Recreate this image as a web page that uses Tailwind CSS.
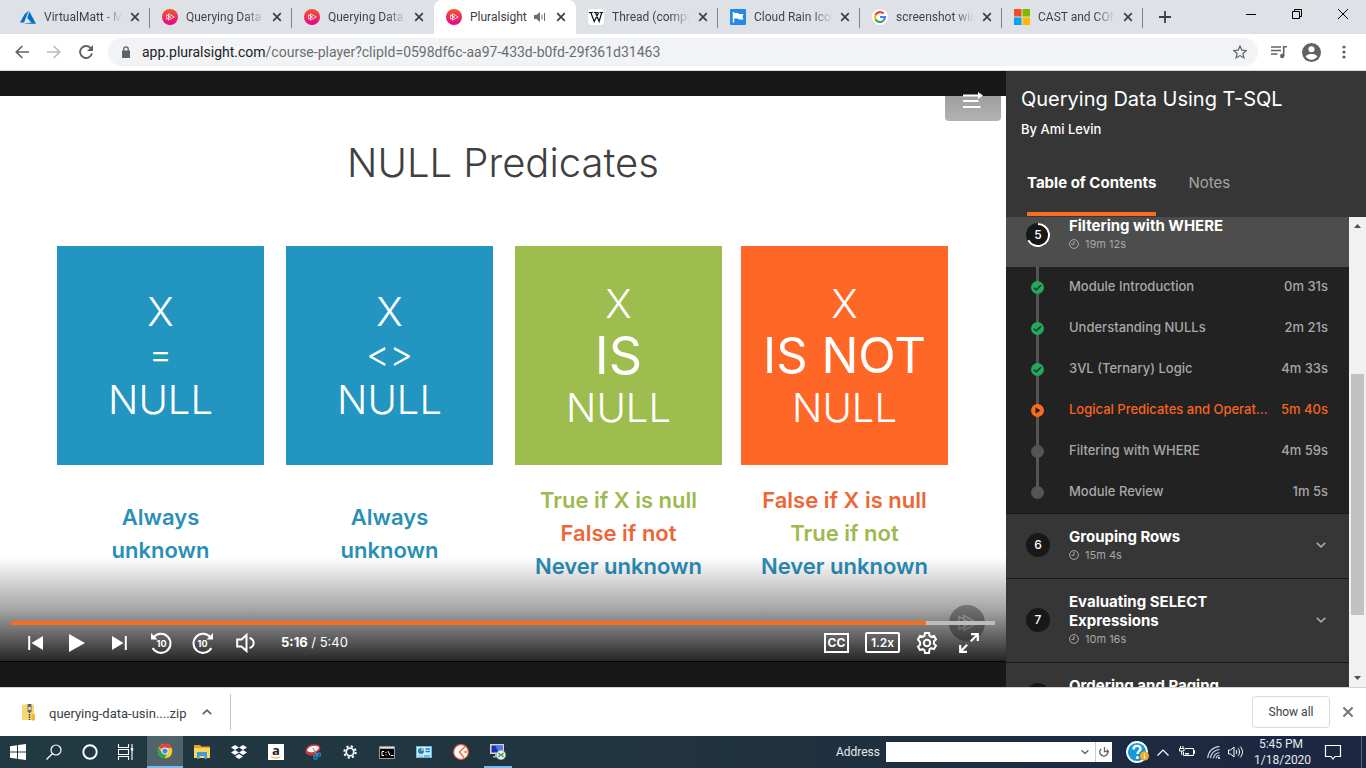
<!DOCTYPE html>
<html lang="en">
<head>
<meta charset="utf-8">
<meta name="viewport" content="width=device-width, initial-scale=1">
<title>Pluralsight</title>
<script src="https://cdn.jsdelivr.net/npm/@tailwindcss/browser@4"></script>
</head>
<body class="flex h-screen flex-col overflow-hidden bg-white font-['Roboto','Noto_Sans',sans-serif] text-xs text-[#3c4043]">

<!-- shared symbols -->
<svg class="absolute size-0" aria-hidden="true">
  <defs>
    <linearGradient id="psg" x1="0" y1="0" x2="0" y2="1"><stop offset="0" stop-color="#f05a28"/><stop offset="1" stop-color="#ec008c"/></linearGradient>
  </defs>
  <symbol id="ps" viewBox="0 0 16 16"><circle cx="8" cy="8" r="8" fill="url(#psg)"/><path d="M6.5 4.8v6.4L12.3 8zM4.6 5.8v4.4L8.6 8z" fill="none" stroke="#fff" stroke-opacity=".85" stroke-width=".9"/></symbol>
  <symbol id="x" viewBox="0 0 10 10"><path d="M1.2 1.2l7.6 7.6M8.8 1.2L1.2 8.8" stroke="currentColor" stroke-width="1.7" fill="none"/></symbol>
  <symbol id="clock" viewBox="0 0 10 10"><circle cx="5" cy="5" r="4.4" fill="none" stroke="currentColor"/><path d="M5 2v3.3H2.4" fill="none" stroke="currentColor"/></symbol>
  <symbol id="done" viewBox="0 0 13 13"><circle cx="6.5" cy="6.5" r="6.5" fill="#24a85b"/><path d="M3 6.8l2.3 2.1 4.6-4.6" fill="none" stroke="#222" stroke-width="1.4"/></symbol>
  <symbol id="dot" viewBox="0 0 13 13"><circle cx="6.5" cy="6.5" r="6.5" fill="#555"/></symbol>
  <symbol id="chev" viewBox="0 0 10 6"><path d="M.8.8L5 4.8 9.2.8" fill="none" stroke="currentColor" stroke-width="1.7"/></symbol>
</svg>

<!-- tab strip -->
<header class="shrink-0">
  <div class="flex h-[34px] bg-[#dee1e6] pl-2">
    <div class="relative flex w-[142px] items-center pl-3 pr-2.5">
      <svg class="size-4 shrink-0" viewBox="0 0 16 16"><path d="M8.8 1.5L4.6 5.2 0 13.6h4zM9.4 2.6L7.2 8.9l4.2 4.7-8.2 1.2H16z" fill="#0072c6"/></svg>
      <span class="ml-2 flex-1 overflow-hidden whitespace-nowrap bg-linear-to-r from-[#3c4043] from-75% to-transparent bg-clip-text text-transparent">VirtualMatt - Microsoft</span>
      <button aria-label="Close tab" class="ml-2 shrink-0"><svg class="size-2.5"><use href="#x"/></svg></button>
      <i class="absolute right-0 top-2 h-5 w-px bg-[#808387]"></i>
    </div>
    <div class="relative flex w-[142px] items-center pl-3 pr-2.5">
      <svg class="size-4 shrink-0"><use href="#ps"/></svg>
      <span class="ml-2 flex-1 overflow-hidden whitespace-nowrap bg-linear-to-r from-[#3c4043] from-75% to-transparent bg-clip-text text-transparent">Querying Data Using</span>
      <button aria-label="Close tab" class="ml-2 shrink-0"><svg class="size-2.5"><use href="#x"/></svg></button>
      <i class="absolute right-0 top-2 h-5 w-px bg-[#808387]"></i>
    </div>
    <div class="flex w-[142px] items-center pl-3 pr-2.5">
      <svg class="size-4 shrink-0"><use href="#ps"/></svg>
      <span class="ml-2 flex-1 overflow-hidden whitespace-nowrap bg-linear-to-r from-[#3c4043] from-75% to-transparent bg-clip-text text-transparent">Querying Data Using</span>
      <button aria-label="Close tab" class="ml-2 shrink-0"><svg class="size-2.5"><use href="#x"/></svg></button>
    </div>
    <div class="flex w-[142px] items-center rounded-t-lg bg-white pl-3 pr-2.5">
      <svg class="size-4 shrink-0"><use href="#ps"/></svg>
      <span class="ml-2 flex-1 whitespace-nowrap">Pluralsight</span>
      <svg class="size-3 shrink-0 text-[#6b6e72]" viewBox="0 0 12 12"><path d="M0 4h2.5L6 1v10L2.500 8H0z" fill="currentColor"/><path d="M8 3.500v5M10.500 2v8" stroke="currentColor"/></svg>
      <button aria-label="Close tab" class="ml-2.5 shrink-0"><svg class="size-2.5"><use href="#x"/></svg></button>
    </div>
    <div class="relative flex w-[142px] items-center pl-3 pr-2.5">
      <svg class="size-4 shrink-0" viewBox="0 0 16 16"><rect width="16" height="16" rx="3" fill="#fff"/><path d="M.8 3.500h4M5.800 3.500h4M11.600 3.500h3.600M2.800 3.500l3.400 9 4.500-9M7.500 3.500l3.600 9 2.700-9" fill="none" stroke="#111" stroke-width="1.200"/></svg>
      <span class="ml-2 flex-1 overflow-hidden whitespace-nowrap bg-linear-to-r from-[#3c4043] from-75% to-transparent bg-clip-text text-transparent">Thread (computing)</span>
      <button aria-label="Close tab" class="ml-2 shrink-0"><svg class="size-2.5"><use href="#x"/></svg></button>
      <i class="absolute right-0 top-2 h-5 w-px bg-[#808387]"></i>
    </div>
    <div class="relative flex w-[142px] items-center pl-3 pr-2.5">
      <svg class="size-4 shrink-0" viewBox="0 0 16 16"><rect width="16" height="16" rx="1" fill="#228ae6"/><path d="M3.500 3v10.500" stroke="#fff" stroke-width="1.500"/><path d="M4 4h4l1 1h4.500l-1 2.700 1 2.800H9l-1-1H4z" fill="#fff"/></svg>
      <span class="ml-2 flex-1 overflow-hidden whitespace-nowrap bg-linear-to-r from-[#3c4043] from-75% to-transparent bg-clip-text text-transparent">Cloud Rain Icon</span>
      <button aria-label="Close tab" class="ml-2 shrink-0"><svg class="size-2.5"><use href="#x"/></svg></button>
      <i class="absolute right-0 top-2 h-5 w-px bg-[#808387]"></i>
    </div>
    <div class="relative flex w-[142px] items-center pl-3 pr-2.5">
      <svg class="size-4 shrink-0" viewBox="0 0 16 16"><circle cx="8" cy="8" r="8" fill="#fff"/><g fill="none" stroke-width="2.200"><path d="M11.600 4.500A5 5 0 0 0 3.500 6" stroke="#ea4335"/><path d="M3.500 6a5 5 0 0 0 0 4.200" stroke="#fbbc05"/><path d="M3.500 10.200a5 5 0 0 0 7.800 1.500" stroke="#34a853"/><path d="M11.300 11.700A5 5 0 0 0 13 8H8" stroke="#4285f4"/></g></svg>
      <span class="ml-2 flex-1 overflow-hidden whitespace-nowrap bg-linear-to-r from-[#3c4043] from-75% to-transparent bg-clip-text text-transparent">screenshot windows</span>
      <button aria-label="Close tab" class="ml-2 shrink-0"><svg class="size-2.5"><use href="#x"/></svg></button>
      <i class="absolute right-0 top-2 h-5 w-px bg-[#808387]"></i>
    </div>
    <div class="relative flex w-[141px] items-center pl-3 pr-2.5">
      <svg class="size-4 shrink-0" viewBox="0 0 16 16"><path d="M0 0h7.500v7.500H0z" fill="#f25022"/><path d="M8.500 0H16v7.500H8.500z" fill="#7fba00"/><path d="M0 8.500h7.500V16H0z" fill="#00a4ef"/><path d="M8.500 8.500H16V16H8.500z" fill="#ffb900"/></svg>
      <span class="ml-2 flex-1 overflow-hidden whitespace-nowrap bg-linear-to-r from-[#3c4043] from-75% to-transparent bg-clip-text text-transparent">CAST and CONVERT</span>
      <button aria-label="Close tab" class="ml-2 shrink-0"><svg class="size-2.5"><use href="#x"/></svg></button>
      <i class="absolute right-0 top-2 h-5 w-px bg-[#808387]"></i>
    </div>
    <button aria-label="New tab" class="ml-2 flex w-7 items-center justify-center"><svg class="size-3" viewBox="0 0 12 12"><path d="M6 0v12M0 6h12" stroke="#3c4043" stroke-width="1.800"/></svg></button>
    <div class="ml-auto flex h-7 text-black">
      <button aria-label="Minimize" class="flex w-[46px] items-center justify-center"><svg class="size-2.5" viewBox="0 0 10 10"><path d="M0 5.500h10" stroke="currentColor"/></svg></button>
      <button aria-label="Restore" class="flex w-[46px] items-center justify-center"><svg class="size-2.5" viewBox="0 0 10 10"><path d="M.5 2.500h7v7h-7zM2.500 2.500v-2h7v7h-2" fill="none" stroke="currentColor"/></svg></button>
      <button aria-label="Close" class="flex w-[46px] items-center justify-center"><svg class="size-2.5" viewBox="0 0 10 10"><path d="M0 0l10 10M10 0L0 10" stroke="currentColor"/></svg></button>
    </div>
  </div>

  <!-- toolbar -->
  <div class="flex h-[37px] items-center border-b border-[#d5d8dc] bg-white pr-3.5">
    <div class="flex w-[108px] shrink-0 items-center gap-[18px] pl-[15px] text-[#5f6368]">
      <button aria-label="Back"><svg class="size-3.5" viewBox="0 0 14 14"><path d="M14 7H1.500M7.300 1L1.300 7l6 6" fill="none" stroke="currentColor" stroke-width="1.700"/></svg></button>
      <button aria-label="Forward" class="text-[#b8babd]"><svg class="size-3.5" viewBox="0 0 14 14"><path d="M0 7h12.500M6.700 1l6 6-6 6" fill="none" stroke="currentColor" stroke-width="1.700"/></svg></button>
      <button aria-label="Reload"><svg class="size-3.5" viewBox="0 0 14 14"><path d="M12 3.500A6 6 0 1 0 13 8.400" fill="none" stroke="currentColor" stroke-width="1.900"/><path d="M14 0v6H8z" fill="currentColor"/></svg></button>
    </div>
    <div class="flex h-7 flex-1 items-center rounded-full bg-[#f1f3f4] pl-3.5 pr-[11px]">
      <svg class="h-3 w-2 shrink-0" viewBox="0 0 8 12"><path d="M0 4.500h8V12H0z" fill="#5f6368"/><path d="M1.800 5V3a2.200 2.200 0 0 1 4.400 0v2" fill="none" stroke="#5f6368" stroke-width="1.300"/></svg>
      <a href="#" class="ml-3 flex-1 whitespace-nowrap text-[14px] text-[#6a6e73]"><span class="text-[#202124]">app.pluralsight.com</span>/course-player?clipId=0598df6c-aa97-433d-b0fd-29f361d31463</a>
      <button aria-label="Bookmark"><svg class="size-3.5" viewBox="0 0 14 14"><path d="M7 1l1.800 4.100 4.500.4-3.400 3 1 4.400L7 10.600l-3.900 2.300 1-4.400-3.400-3 4.500-.4z" fill="none" stroke="#5f6368" stroke-width="1.200"/></svg></button>
    </div>
    <div class="flex shrink-0 items-center gap-[15px] pl-[13px] text-[#5f6368]">
      <button aria-label="Media"><svg class="h-3.5 w-4" viewBox="0 0 16 14"><path d="M0 2h10M0 5.500h10M0 9h6.500" stroke="currentColor" stroke-width="1.500"/><path d="M12.700 11V1.800H16" fill="none" stroke="currentColor" stroke-width="1.600"/><circle cx="11.200" cy="11" r="2.200" fill="currentColor"/></svg></button>
      <button aria-label="Profile"><svg class="size-[19px]" viewBox="0 0 20 20"><circle cx="10" cy="10" r="10" fill="currentColor"/><circle cx="10" cy="6.500" r="3.200" fill="#fff"/><path d="M3.800 14.200C5 12.300 8 11.700 10 11.700s5 .6 6.200 2.500A7.600 7.600 0 0 1 10 17.500a7.600 7.600 0 0 1-6.200-3.300z" fill="#fff"/></svg></button>
      <button aria-label="Menu" class="flex w-4 justify-center"><svg class="h-3.5 w-1" viewBox="0 0 4 14"><circle cx="2" cy="2" r="1.600" fill="currentColor"/><circle cx="2" cy="7" r="1.600" fill="currentColor"/><circle cx="2" cy="12" r="1.600" fill="currentColor"/></svg></button>
    </div>
  </div>
</header>

<!-- page -->
<main class="flex min-h-0 flex-1 bg-[#181818] font-['Inter',sans-serif]">

  <!-- player -->
  <section class="flex min-w-0 flex-1 flex-col justify-center">
    <div class="relative aspect-video w-full border-b border-black bg-white">
      <!-- slide -->
      <h1 class="pt-[43px] text-center text-[40px] font-light leading-[48px] text-[#404040]">NULL Predicates</h1>
      <div class="mt-[59px] grid grid-cols-[57fr_207fr_22fr_207fr_22fr_207fr_19fr_207fr_58fr] text-center text-[40px] font-light leading-[46px] text-white">
        <div class="col-start-2 flex h-[219px] flex-col justify-center bg-[#2295c0] pt-1"><p>X</p><p class="text-[36px] leading-[38px]">=</p><p class="leading-[54px]">NULL</p></div>
        <div class="col-start-4 flex h-[219px] flex-col justify-center bg-[#2295c0] pt-1"><p>X</p><p class="text-[36px] leading-[38px]">&lt;&gt;</p><p class="leading-[54px]">NULL</p></div>
        <div class="col-start-6 flex h-[219px] flex-col justify-center bg-[#9dbd4e]"><p>X</p><p class="text-[52px] font-normal leading-[58px]">IS</p><p>NULL</p></div>
        <div class="col-start-8 flex h-[219px] flex-col justify-center bg-[#ff6727]"><p>X</p><p class="text-[49px] font-normal leading-[58px]">IS NOT</p><p>NULL</p></div>
      </div>
      <div class="mt-[19px] grid grid-cols-[57fr_207fr_22fr_207fr_22fr_207fr_19fr_207fr_58fr] items-center whitespace-nowrap text-center text-[22px] font-semibold leading-[33px] text-[#2a8fb8]">
        <p class="col-start-2">Always<br>unknown</p>
        <p class="col-start-4">Always<br>unknown</p>
        <p class="col-start-6"><span class="text-[#9dba50]">True if X is null</span><br><span class="text-[#ee6637]">False if not</span><br>Never unknown</p>
        <p class="col-start-8"><span class="text-[#ee6637]">False if X is null</span><br><span class="text-[#9dba50]">True if not</span><br>Never unknown</p>
      </div>

      <!-- watermark -->
      <svg class="absolute bottom-5 right-[21px] size-9" viewBox="0 0 36 36"><circle cx="18" cy="18" r="18" fill="#aaa"/><path d="M15 10.500v15L28 18zM10 11.500v13l12-6.500z" fill="none" stroke="#ececec" stroke-width="1.500"/></svg>

      <button aria-label="Toggle contents" class="absolute right-[5px] top-0 h-[25px] w-14 rounded-b-sm bg-linear-to-b from-[#9e9e9e] to-[#b3b3b3]">
        <svg class="absolute -top-1 left-[17px] h-4 w-[22px]" viewBox="0 0 22 16"><path d="M1 3.500h17M1 9h15.500M1 15h17.500" stroke="#fff" stroke-width="2"/><path d="M16 0l5 3.500L16 7z" fill="#fff"/></svg>
      </button>

      <!-- playback controls -->
      <div class="absolute inset-x-0 bottom-0 flex h-[104px] flex-col justify-end bg-linear-to-b from-black/0 via-black/35 via-50% to-black/85 px-[11px] text-white">
        <input type="range" aria-label="Seek" min="0" max="340" value="316" class="block h-1 w-full appearance-none bg-[linear-gradient(to_right,#fa6b1e_93%,#bdbdbd_93%)] [&::-webkit-slider-thumb]:size-0 [&::-webkit-slider-thumb]:appearance-none">
        <div class="flex h-9 items-center">
          <button aria-label="Previous" class="flex w-12 justify-center"><svg class="h-4 w-[15px]" viewBox="0 0 15 16"><path d="M1.200 1v14" stroke="#fff" stroke-width="2"/><path d="M15 1v14L3.500 8z" fill="#fff"/></svg></button>
          <button aria-label="Play" class="flex w-9 justify-center"><svg class="h-[18px] w-4" viewBox="0 0 16 18"><path d="M0 0v18l16-9z" fill="#fff"/></svg></button>
          <button aria-label="Next" class="flex w-12 justify-center"><svg class="h-4 w-[15px]" viewBox="0 0 15 16"><path d="M13.800 1v14" stroke="#fff" stroke-width="2"/><path d="M0 1v14l11.500-7z" fill="#fff"/></svg></button>
          <button aria-label="Back 10 seconds" class="flex w-9 justify-center"><svg class="h-6 w-[22px]" viewBox="0 0 22 24"><path d="M3.500 6.500a9.500 9.500 0 1 1-.8 10.500" fill="none" stroke="#fff" stroke-width="2"/><path d="M1 2v6.500h6.500z" fill="#fff"/><text x="11.500" y="16" text-anchor="middle" font-family="Inter" font-size="9" font-weight="700" fill="#fff">10</text></svg></button>
          <button aria-label="Forward 10 seconds" class="flex w-12 justify-center"><svg class="h-6 w-[22px]" viewBox="0 0 22 24"><path d="M18.500 6.500a9.500 9.500 0 1 0 .8 10.500" fill="none" stroke="#fff" stroke-width="2"/><path d="M21 2v6.500h-6.500z" fill="#fff"/><text x="10.500" y="16" text-anchor="middle" font-family="Inter" font-size="9" font-weight="700" fill="#fff">10</text></svg></button>
          <button aria-label="Volume" class="flex w-9 justify-center"><svg class="h-5 w-[19px]" viewBox="0 0 19 20"><path d="M1.200 6.500h4.300L10.500 2v16l-5-4.500H1.200z" fill="none" stroke="#fff" stroke-width="2"/><path d="M13.500 5c5.500 1.500 5.500 8.500 0 10" fill="none" stroke="#fff" stroke-width="2"/></svg></button>
          <span class="ml-[18px] text-[13px]"><b>5:16</b> / 5:40</span>
          <button class="ml-auto h-5 w-[25px] border-2 border-white text-xs font-bold leading-4">CC</button>
          <button class="ml-4 h-[21px] w-[35px] rounded-xs border-2 border-white text-xs font-semibold leading-4">1.2x</button>
          <button aria-label="Settings" class="ml-4"><svg class="size-[22px]" viewBox="0 0 22 22"><path d="M9 1h4l.6 2.800 1.700 1 2.700-.9 2 3.500-2.100 1.900v2.400l2.100 1.900-2 3.500-2.700-.9-1.700 1L13 21H9l-.6-2.800-1.700-1-2.700.9-2-3.500 2.100-1.900v-2.400L2 7.400l2-3.500 2.700.9 1.700-1z" fill="none" stroke="#fff" stroke-width="2"/><circle cx="11" cy="11" r="3.200" fill="none" stroke="#fff" stroke-width="2"/></svg></button>
          <button aria-label="Full screen" class="ml-[21px] mr-4"><svg class="size-5" viewBox="0 0 20 20"><path d="M12 1.200h6.800V8M18.500 1.500l-6.700 6.700M8 18.800H1.200V12M1.500 18.500l6.700-6.700" fill="none" stroke="#fff" stroke-width="2.200"/></svg></button>
        </div>
      </div>
    </div>
  </section>

  <!-- sidebar -->
  <aside class="flex w-[360px] shrink-0 flex-col bg-[#363636] text-white">
    <div class="h-[146px] shrink-0 px-[15px] pt-4">
      <h2 class="text-[20px] leading-6">Querying Data Using T-SQL</h2>
      <p class="mt-2 text-[13px] font-medium leading-5">By Ami Levin</p>
      <nav class="mt-[27px] flex gap-8 pl-1.5 text-[15px] leading-[34px]">
        <button class="h-[50px] border-b-4 border-[#fa6b1e] pb-3 font-bold">Table of Contents</button>
        <button class="h-[50px] pb-4 text-[#a3a3a3]">Notes</button>
      </nav>
    </div>
    <div class="flex min-h-0 flex-1">
      <div class="min-w-0 flex-1 overflow-hidden">
        <section class="-mt-3.5">
          <header class="flex min-h-16 items-center bg-[#4d4d4d] pl-5 pr-[21px]">
            <span class="relative flex size-6 shrink-0 items-center justify-center rounded-full bg-[#181818] text-xs font-medium">5
              <svg class="absolute inset-0 size-6" viewBox="0 0 24 24"><path d="M12 1a11 11 0 1 1-9.700 16.200" fill="none" stroke="#fff" stroke-width="2"/></svg></span>
            <div class="ml-[19px] flex-1 pb-px">
              <h3 class="text-[15px] font-bold leading-[19px]">Filtering with WHERE</h3>
              <p class="flex items-center gap-1.5 text-[11px] leading-[18px] text-[#a8a8a8]"><svg class="size-2.5"><use href="#clock"/></svg>19m 12s</p>
            </div>
          </header>
          <ul class="relative bg-[#222] text-[13px] font-medium text-[#a8a8a8]">
            <li class="absolute bottom-5 left-[30px] top-0 w-[3px] bg-[#555]" role="presentation"></li>
            <li class="relative flex h-[41px] items-center pb-px pl-[25px] pr-[21px]"><svg class="size-[13px] shrink-0"><use href="#done"/></svg><a href="#" class="ml-[25px] flex-1 truncate">Module Introduction</a><span>0m 31s</span></li>
            <li class="relative flex h-[41px] items-center pb-px pl-[25px] pr-[21px]"><svg class="size-[13px] shrink-0"><use href="#done"/></svg><a href="#" class="ml-[25px] flex-1 truncate">Understanding NULLs</a><span>2m 21s</span></li>
            <li class="relative flex h-[41px] items-center pb-px pl-[25px] pr-[21px]"><svg class="size-[13px] shrink-0"><use href="#done"/></svg><a href="#" class="ml-[25px] flex-1 truncate">3VL (Ternary) Logic</a><span>4m 33s</span></li>
            <li class="relative flex h-[41px] items-center pb-px pl-[25px] pr-[21px] text-[#f9631c]"><svg class="size-[13px] shrink-0" viewBox="0 0 13 13"><circle cx="6.500" cy="6.500" r="6.500" fill="#fa6b1e"/><path d="M4.500 3.300v6.400l5-3.200z" fill="#222"/></svg><a href="#" class="ml-[25px] w-[203px] truncate">Logical Predicates and Operators</a><span class="ml-auto">5m 40s</span></li>
            <li class="relative flex h-[41px] items-center pb-px pl-[25px] pr-[21px]"><svg class="size-[13px] shrink-0"><use href="#dot"/></svg><a href="#" class="ml-[25px] flex-1 truncate">Filtering with WHERE</a><span>4m 59s</span></li>
            <li class="relative flex h-[41px] items-center pb-px pl-[25px] pr-[21px]"><svg class="size-[13px] shrink-0"><use href="#dot"/></svg><a href="#" class="ml-[25px] flex-1 truncate">Module Review</a><span>1m 5s</span></li>
          </ul>
        </section>
        <section class="flex min-h-[65px] items-center border-t border-[#181818] pb-3.5 pl-5 pr-[23px] pt-3">
          <span class="flex size-6 shrink-0 items-center justify-center rounded-full bg-[#181818] text-xs font-medium">6</span>
          <div class="ml-[19px] flex-1">
            <h3 class="text-[15px] font-bold leading-[19px]">Grouping Rows</h3>
            <p class="flex items-center gap-1.5 text-[11px] leading-[18px] text-[#a8a8a8]"><svg class="size-2.5"><use href="#clock"/></svg>15m 4s</p>
          </div>
          <button aria-label="Expand" class="text-[#a8a8a8]"><svg class="h-1.5 w-2.5"><use href="#chev"/></svg></button>
        </section>
        <section class="flex min-h-[84px] items-center border-t border-[#181818] pb-3.5 pl-5 pr-[23px] pt-3">
          <span class="flex size-6 shrink-0 items-center justify-center rounded-full bg-[#181818] text-xs font-medium">7</span>
          <div class="ml-[19px] flex-1">
            <h3 class="text-[15px] font-bold leading-[19px]">Evaluating SELECT<br>Expressions</h3>
            <p class="flex items-center gap-1.5 text-[11px] leading-[18px] text-[#a8a8a8]"><svg class="size-2.5"><use href="#clock"/></svg>10m 16s</p>
          </div>
          <button aria-label="Expand" class="text-[#a8a8a8]"><svg class="h-1.5 w-2.5"><use href="#chev"/></svg></button>
        </section>
        <section class="flex h-16 items-center border-t border-[#181818] pl-5 pr-[23px]">
          <span class="flex size-6 shrink-0 items-center justify-center rounded-full bg-[#181818] text-xs font-medium">8</span>
          <div class="ml-[19px] flex-1">
            <h3 class="text-[15px] font-bold leading-[19px]">Ordering and Paging</h3>
            <p class="text-[11px] leading-[18px]">&nbsp;</p>
          </div>
        </section>
      </div>
      <!-- scrollbar -->
      <div class="flex w-[17px] shrink-0 flex-col items-center bg-[#f1f1f1]">
        <svg class="h-[17px] w-[17px] shrink-0" viewBox="0 0 17 17"><path d="M5 11h7L8.500 7z" fill="#505050"/></svg>
        <div class="flex-[140]"></div>
        <div class="w-[13px] flex-[241] bg-[#c1c1c1]"></div>
        <div class="flex-[55]"></div>
        <svg class="h-[17px] w-[17px] shrink-0" viewBox="0 0 17 17"><path d="M5 6h7l-3.500 4z" fill="#505050"/></svg>
      </div>
    </div>
  </aside>
</main>

<!-- downloads shelf -->
<section class="flex h-[49px] shrink-0 items-center border-t border-[#d5d5d5] bg-white pl-[22px] pr-3">
  <svg class="h-[17px] w-3.5" viewBox="0 0 14 17"><path d="M0 .5h12V16H0z" fill="#f6d673"/><path d="M9.500 10H13v6.500H9.500z" fill="#eab93a"/><path d="M5.500 0h4v8h-4z" fill="#77746a"/><path d="M7.500 0v16" stroke="#444" stroke-width="1.500" stroke-dasharray="1.500 1"/><path d="M6.500 3h2v3h-2z" fill="#eee"/></svg>
  <span class="ml-[13px] w-[139px] whitespace-nowrap pt-1 text-[13px]">querying-data-usin....zip</span>
  <button aria-label="Download options" class="ml-3.5 text-[#5f6368]"><svg class="h-1.5 w-2.5 rotate-180"><use href="#chev"/></svg></button>
  <i class="ml-[18px] h-9 w-px bg-[#c6c6c6]"></i>
  <button class="ml-auto h-8 w-[78px] rounded border border-[#d9dbde] text-xs">Show all</button>
  <button aria-label="Close shelf" class="ml-3 text-[#74777b]"><svg class="size-3"><use href="#x"/></svg></button>
</section>

<!-- taskbar -->
<footer class="flex h-8 shrink-0 items-center bg-linear-to-r from-[#213a42] via-[#20333f] to-[#1b2641] text-[#e6e9eb]">
  <div class="flex h-full">
    <button aria-label="Start" class="flex w-9 items-center justify-center"><svg class="size-4" viewBox="0 0 16 16"><path d="M0 2.300L7 1.200v6.300H0zM8 1l8-1v7.500H8zM0 8.500h7v6.300l-7-1.100zM8 8.500h8V16l-8-1z" fill="#fff"/></svg></button>
    <button aria-label="Search" class="flex w-9 items-center justify-center"><svg class="size-4" viewBox="0 0 16 16"><circle cx="10" cy="6" r="5" fill="none" stroke="#fff" stroke-width="1.200"/><path d="M6.500 9.500L.5 15.500" stroke="#fff" stroke-width="1.300"/></svg></button>
    <button aria-label="Cortana" class="flex w-9 items-center justify-center"><svg class="size-4" viewBox="0 0 16 16"><circle cx="8" cy="8" r="6.700" fill="none" stroke="#fff" stroke-width="1.900"/></svg></button>
    <button aria-label="Task view" class="flex w-9 items-center justify-center"><svg class="size-4" viewBox="0 0 16 16"><path d="M.5 0v3.500h10V0M.5 16v-3.500h10V16M.5 5.500h10v5H.5zM14 0v16" fill="none" stroke="#fff" stroke-width="1.100"/><path d="M12.800 4h2.400v2.500h-2.400z" fill="#fff"/></svg></button>
  </div>
  <div class="ml-[3px] flex h-full gap-px">
    <button aria-label="Chrome" class="flex w-9 items-center justify-center border-b-2 border-[#76b9ed] bg-[#50636b]"><svg class="size-4" viewBox="0 0 16 16"><circle cx="8" cy="8" r="7.300" fill="#f7cb2d"/><path d="M8 8L1.700 4.300A7.300 7.300 0 0 1 14.600 5H8z" fill="#e5443a"/><path d="M1.500 4.600A7.300 7.300 0 0 0 7.500 15.300L10.500 9.500 5 9.700z" fill="#2ba24c"/><circle cx="8" cy="8" r="3.400" fill="#fff"/><circle cx="8" cy="8" r="2.600" fill="#4285f4"/></svg></button>
    <button aria-label="Explorer" class="flex w-9 items-center justify-center"><svg class="size-4" viewBox="0 0 16 16"><path d="M0 1h6l1.500 1.500H16V14H0z" fill="#e3a42b"/><path d="M0 4h16v10H0z" fill="#fbd65f"/><path d="M3 8h10v7h-2.500v-3h-5v3H3z" fill="#3f9ad8"/></svg></button>
    <button aria-label="Dropbox" class="flex w-9 items-center justify-center"><svg class="size-4" viewBox="0 0 16 16"><path d="M4 1l4 2.500L4 6 0 3.500zM12 1l4 2.500L12 6 8 3.500zM4 6l4 2.500L4 11 0 8.500zM12 6l4 2.500-4 2.500-4-2.500zM8 10l4 2.500L8 15l-4-2.500z" fill="#fff"/></svg></button>
    <button aria-label="Amazon" class="flex w-9 items-center justify-center"><span class="relative flex size-4 items-center justify-center bg-white pb-1 font-['Open_Sans',sans-serif] text-[13px] font-bold leading-none text-[#222]">a<svg class="absolute bottom-0 left-0 size-4" viewBox="0 0 16 16"><path d="M3 12.500c3 2 7 2 9.500 0" fill="none" stroke="#f59a23"/></svg></span></button>
    <button aria-label="Snipping Tool" class="flex w-9 items-center justify-center"><svg class="size-4" viewBox="0 0 16 16"><ellipse cx="8" cy="5" rx="6.800" ry="3.800" transform="rotate(-15 8 5)" fill="#f4f4f4" stroke="#d3343f" stroke-width="1.500"/><path d="M1 7c1 4 6 4 9 3" fill="none" stroke="#d3343f" stroke-width="2"/><path d="M8 4l4 8M9 9l5 1" stroke="#888"/><circle cx="14" cy="10.500" r="1.600" fill="none" stroke="#1c8ad1" stroke-width="1.400"/><circle cx="10.500" cy="13.500" r="1.700" fill="none" stroke="#1c8ad1" stroke-width="1.400"/></svg></button>
    <button aria-label="Settings" class="flex w-9 items-center justify-center"><svg class="size-3.5" viewBox="0 0 14 14"><circle cx="7" cy="7" r="3.800" fill="none" stroke="#fff" stroke-width="1.800"/><circle cx="7" cy="7" r="5.700" fill="none" stroke="#fff" stroke-width="2" stroke-dasharray="2.240 2.240"/></svg></button>
    <button aria-label="Command Prompt" class="flex w-9 items-center justify-center"><svg class="h-[13px] w-4" viewBox="0 0 16 13"><path d="M.5.5h15v12H.5z" fill="#000" stroke="#9a9a9a"/><path d="M1 1h14v1.800H1z" fill="#ddd"/><path d="M5 5.500H3v4h2M7 6v1M7 8.500v1M9 5l2 4.500M12 9.500h2.500" fill="none" stroke="#fff"/></svg></button>
    <button aria-label="Control Panel" class="flex w-9 items-center justify-center"><svg class="h-3 w-4" viewBox="0 0 16 12"><path d="M0 0h16v12H0z" fill="#62bdf2"/><path d="M1 1h14v10H1z" fill="#c9ecff"/><circle cx="5" cy="5" r="3" fill="#1685cf"/><path d="M5 5V2a3 3 0 0 1 3 3z" fill="#f59a23"/><path d="M9.500 3H14M9.500 5.500H14" stroke="#1685cf" stroke-width="1.400"/><path d="M2 10h5" stroke="#f59a23"/><path d="M8 10h6" stroke="#1685cf"/></svg></button>
    <button aria-label="Clock" class="flex w-9 items-center justify-center"><svg class="size-4" viewBox="0 0 16 16"><circle cx="8" cy="8" r="7.300" fill="#fff" stroke="#ee6a3f" stroke-width="1.300"/><path d="M12.500 2L6.500 8l4.500 5.500" fill="none" stroke="#ee6a3f" stroke-width="1.500"/><circle cx="12.500" cy="8" r="1.200" fill="#ee6a3f"/></svg></button>
    <button aria-label="Remote Desktop" class="flex w-9 items-center justify-center bg-[linear-gradient(#76b9ed,#76b9ed)] bg-[length:28px_2px] bg-[position:center_bottom] bg-no-repeat"><svg class="size-4" viewBox="0 0 16 16"><path d="M0 0h14v10H0z" fill="#d8d5c8"/><path d="M1.500 1.500h11v7h-11z" fill="#1730c0"/><path d="M5 1.500h7.500v7H9z" fill="#4d7cf0"/><path d="M5 10h4v2H5zM3 12h7v1.500H3z" fill="#b9b6a8"/><circle cx="11" cy="11" r="4.700" fill="#eee" stroke="#999" stroke-width=".6"/><path d="M8.500 9l2 2-2 2M13.500 9l-2 2 2 2" fill="none" stroke="#2e9a35" stroke-width="1.300"/></svg></button>
  </div>
  <label for="addr" class="ml-auto">Address</label>
  <div class="ml-1.5 flex h-5 w-[226px] bg-white text-[#666]">
    <input id="addr" type="text" class="min-w-0 flex-1 px-1 text-xs text-black outline-none">
    <button aria-label="Show history" class="flex w-5 items-center justify-center"><svg class="h-1.5 w-2" viewBox="0 0 10 6"><use href="#chev"/></svg></button>
    <button aria-label="Refresh" class="flex w-[17px] items-center justify-center border-l border-[#ccc]"><svg class="size-2.5" viewBox="0 0 10 10"><path d="M2.200 2A4 4 0 1 0 8 2.600" fill="none" stroke="#666" stroke-width="1.500"/><path d="M5.500 0v4.500H10" fill="none" stroke="#666" stroke-width="1.300"/></svg></button>
  </div>
  <button aria-label="Help" class="ml-3.5"><svg class="size-[23px]" viewBox="0 0 23 23"><circle cx="11" cy="11" r="10" fill="#149ad9" stroke="#fff" stroke-width="1.800"/><path d="M7.500 8.500c0-5 7.500-4.500 7-.5-.3 2.200-3 2.200-3 5" fill="none" stroke="#fff" stroke-width="2.400"/><circle cx="11.400" cy="16.500" r="1.500" fill="#fff"/><circle cx="18.500" cy="15" r="4.500" fill="#f3ab25"/><path d="M18.500 14.500v3M18.500 12.200v1.200" stroke="#fff" stroke-width="1.300"/></svg></button>
  <button aria-label="Hidden icons" class="ml-2"><svg class="h-[7px] w-3" viewBox="0 0 12 7"><path d="M.5 6.500L6 1l5.500 5.500" fill="none" stroke="#fff" stroke-width="1.200"/></svg></button>
  <svg class="ml-2.5 h-3 w-4" viewBox="0 0 16 12"><path d="M6 2.500h8.500v7H4.500V6M14.500 4.500h1v3h-1" fill="none" stroke="#fff"/><path d="M1.500 0v2M4 0v2M.5 2.500h4.500v2.500H.5zM2.700 5v4" fill="none" stroke="#fff"/><path d="M6 7h4v1.500H6z" fill="#fff"/></svg>
  <svg class="ml-3 h-3.5 w-[13px]" viewBox="0 0 13 14"><path d="M.8 13A12 12 0 0 1 12.500 1.500M3.500 13.200a9.300 9.300 0 0 1 9-8.700M6.500 13.300a6 6 0 0 1 6-5.600M9.200 13.300a3 3 0 0 1 3.300-2.800" fill="none" stroke="#dde" stroke-width="1.100"/><circle cx="12" cy="13" r="1" fill="#fff"/></svg>
  <svg class="ml-2 h-3.5 w-4" viewBox="0 0 16 14"><path d="M.5 5h2.200L6 2v10L2.700 9H.5zM8 5c1 1.200 1 2.800 0 4M10 3.200c2 2.200 2 5.400 0 7.600M12.200 1.500c3 3.300 3 7.700 0 11" fill="none" stroke="#fff"/></svg>
  <time class="ml-2.5 w-[54px] whitespace-nowrap text-center leading-4">5:45 PM<br>1/18/2020</time>
  <button aria-label="Notifications" class="ml-4"><svg class="h-[17px] w-[18px]" viewBox="0 0 18 17"><path d="M1.500 1.500h15v11H11L9 15l-2-2.500H1.500z" fill="none" stroke="#fff" stroke-width="1.200"/></svg></button>
  <i class="ml-[19px] mr-1 h-full w-px bg-[#5b667b]"></i>
</footer>
</body>
</html>
